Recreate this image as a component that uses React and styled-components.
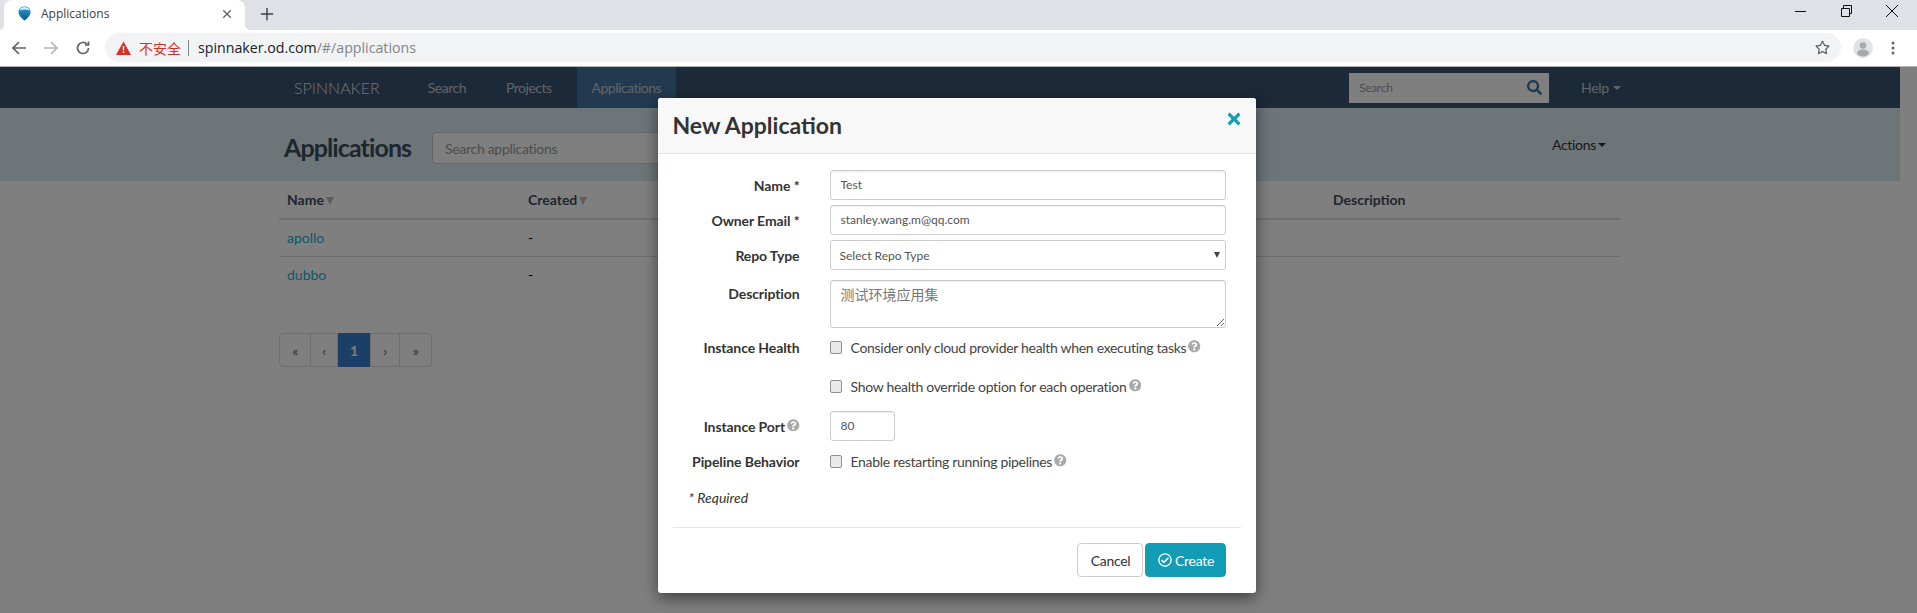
import React from 'react';
import styled, { createGlobalStyle } from 'styled-components';
import { FaQuestionCircle, FaSearch, FaTimes, FaRegCheckCircle, FaRegStar } from 'react-icons/fa';

const GlobalStyle = createGlobalStyle`
  html, body {
    margin: 0;
    height: 100%;
    overflow: hidden;
    background: #fff;
    font-family: "Lato", "Noto Sans CJK SC", sans-serif;
    letter-spacing: -0.3px;
  }
  * { box-sizing: border-box; }
`;

const Window = styled.div`
  display: flex;
  flex-direction: column;
  width: 1917px;
  height: 613px;
`;

// browser chrome
const TabStrip = styled.div`
  display: flex;
  align-items: flex-start;
  height: 30px;
  flex: none;
  background: #dee1e6;
  padding-left: 4px;
  letter-spacing: 0;
`;

const Tab = styled.div`
  position: relative;
  display: flex;
  align-items: center;
  width: 241px;
  height: 30px;
  padding: 0 12px 3px 14px;
  background: #fff;
  border-radius: 8px 8px 0 0;
  font-family: "Open Sans", sans-serif;
  font-size: 12px;
  color: #3c4043;

  &::before, &::after {
    content: '';
    position: absolute;
    bottom: 0;
    width: 6px;
    height: 6px;
  }
  &::before { left: -6px; background: radial-gradient(circle at 0 0, #dee1e6 6px, #fff 6.5px); }
  &::after { right: -6px; background: radial-gradient(circle at 100% 0, #dee1e6 6px, #fff 6.5px); }
`;

const TabTitle = styled.span`
  margin-left: 10px;
  flex: 1;
`;

const NewTab = styled.div`
  display: flex;
  align-items: center;
  height: 28px;
  margin-left: 15px;
`;

const WindowControls = styled.div`
  display: flex;
  align-items: center;
  gap: 30px;
  margin-left: auto;
  margin-right: 17px;
  height: 21px;
`;

const Toolbar = styled.div`
  display: flex;
  align-items: center;
  height: 37px;
  flex: none;
  padding: 0 0 1px 11px;
  background: #fff;
  border-bottom: 1px solid #b4b4b4;
  letter-spacing: 0;
`;

const NavIcons = styled.div`
  display: flex;
  align-items: center;
  gap: 16px;
  width: 94px;
`;

const Omnibox = styled.div`
  display: flex;
  align-items: center;
  width: 1736px;
  height: 29px;
  padding: 0 11px 0 11px;
  background: #f1f3f4;
  border-radius: 15px;
`;

const InsecureText = styled.span`
  margin-left: 8px;
  font-family: "Noto Sans CJK SC", sans-serif;
  font-size: 14px;
  color: #d93025;
`;

const OmniDivider = styled.span`
  width: 1px;
  height: 16px;
  margin: 0 9px 0 7px;
  background: #80868b;
`;

const Url = styled.span`
  flex: 1;
  font-family: "Open Sans", sans-serif;
  font-size: 14.2px;
  color: #80868b;
  b { font-weight: 400; color: #202124; }
`;

const ToolbarEnd = styled.div`
  display: flex;
  align-items: center;
  gap: 18px;
  margin-left: 12px;
`;

const StarIcon = styled(FaRegStar)`
  font-size: 15px;
  color: #5f6368;
`;

// spinnaker page
const Page = styled.div`
  position: relative;
  flex: 1;
  display: flex;
  overflow: hidden;
  background: #fff;
`;

const Main = styled.div`
  width: 1900px;
`;

const Nav = styled.div`
  height: 41px;
  background: #385270;
`;

const Container = styled.div`
  display: flex;
  align-items: center;
  width: 1341px;
  height: 100%;
  margin: 0 0 0 279px;
`;

const Brand = styled.div`
  margin: 0 33px 0 15px;
  font-size: 16px;
  font-weight: 300;
  letter-spacing: 0;
  color: #e4e7ea;
`;

const NavItems = styled.div`
  display: flex;
  gap: 10px;
  height: 100%;
`;

const NavItem = styled.div`
  display: flex;
  align-items: center;
  padding: 0 15px;
  font-size: 14px;
  letter-spacing: -0.5px;
  color: #c3c9d0;
  background: ${props => (props.$active ? '#45749f' : 'transparent')};
`;

const NavSearch = styled.div`
  display: flex;
  align-items: center;
  justify-content: space-between;
  width: 200px;
  height: 30px;
  margin-left: auto;
  padding: 0 7px 0 10px;
  background: #fff;
  font-size: 12px;
  color: #999;
`;

const NavSearchIcon = styled(FaSearch)`
  font-size: 15px;
  color: #45749f;
`;

const HelpMenu = styled.div`
  display: flex;
  align-items: center;
  gap: 4px;
  margin-left: 32px;
  width: 39px;
  font-size: 14px;
  color: #c3c9d0;
`;

const Caret = styled.span`
  width: 0;
  height: 0;
  border-left: 4px solid transparent;
  border-right: 4px solid transparent;
  border-top: 4px solid ${props => props.$color || 'currentColor'};
`;

const HeaderBand = styled.div`
  height: 73px;
  background: #dbebf0;
`;

const HeaderInner = styled(Container)`
  padding: 0 14px 0 5px;
  align-items: flex-start;
`;

const PageTitle = styled.h2`
  margin: 21px 0 0;
  width: 148px;
  font-size: 25px;
  font-weight: 700;
  line-height: 36px;
  letter-spacing: -0.9px;
  color: #3c4c5c;
`;

const FilterBox = styled.div`
  display: flex;
  align-items: center;
  width: 300px;
  height: 32px;
  margin-top: 24px;
  padding: 0 12px;
  background: #fff;
  border: 1px solid #ccc;
  border-radius: 4px;
  font-size: 14px;
  color: #999;
`;

const ActionsMenu = styled.div`
  display: flex;
  align-items: center;
  gap: 2px;
  margin: 28px 0 0 auto;
  font-size: 14px;
  color: #333;
`;

const TableWrap = styled.div`
  width: 1341px;
  margin-left: 279px;
`;

const TableRow = styled.div`
  display: grid;
  grid-template-columns: 241px 805px 1fr;
  align-items: center;
  padding: ${props => (props.$head ? '0' : '0 0 2px')} 8px;
  height: ${props => (props.$head ? '39px' : '37px')};
  border-bottom: ${props => (props.$head ? '2px solid #ddd' : props.$last ? 'none' : '1px solid #ddd')};
  font-size: 14px;
  font-weight: ${props => (props.$head ? 700 : 400)};
  letter-spacing: 0;
  color: #3c4c5c;
`;

const AppLink = styled.span`
  color: #22aed8;
`;

const Dash = styled.span`
  color: #000;
`;

const SortCaret = styled.span`
  display: inline-block;
  width: 0;
  height: 0;
  margin-left: 2px;
  border-left: 4px solid transparent;
  border-right: 4px solid transparent;
  border-top: 8px solid #bbb;
`;

const Pagination = styled.div`
  display: flex;
  width: fit-content;
  height: 34px;
  margin-top: 39px;
  border: 1px solid #ddd;
  border-radius: 4px;
`;

const PageCell = styled.div`
  display: flex;
  align-items: center;
  justify-content: center;
  width: ${props => props.$w}px;
  border-right: ${props => (props.$end ? 'none' : '1px solid #ddd')};
  font-size: 14px;
  font-weight: ${props => (props.$active ? 700 : 400)};
  color: ${props => (props.$active ? '#fff' : '#666')};
  background: ${props => (props.$active ? '#397fcf' : 'transparent')};
  margin: ${props => (props.$active ? '-1px 0' : '0')};
`;

const ScrollGutter = styled.div`
  flex: 1;
  background: #fff;
`;

// modal
const Backdrop = styled.div`
  position: absolute;
  inset: 0;
  display: flex;
  justify-content: center;
  padding-top: 31px;
  background: rgba(0, 0, 0, 0.5);
`;

const Modal = styled.div`
  align-self: flex-start;
  width: 598px;
  height: 495px;
  background: #fff;
  border-radius: 3px;
  box-shadow: 0 5px 15px rgba(0, 0, 0, 0.5);
  transform: translateX(-2px);
`;

const ModalHeader = styled.div`
  position: relative;
  height: 56px;
  padding: 10px 15px;
  background: #f8f8f8;
  border-bottom: 1px solid #e5e5e5;
  border-radius: 3px 3px 0 0;
`;

const ModalTitle = styled.h3`
  margin: 0;
  font-size: 23px;
  font-weight: 700;
  line-height: 34px;
  letter-spacing: 0;
  color: #333;
`;

const CloseIcon = styled(FaTimes)`
  position: absolute;
  top: 12px;
  right: 13px;
  font-size: 18px;
  color: #139cb5;
`;

const ModalBody = styled.div`
  display: flex;
  flex-direction: column;
  padding: 16px 30px 0 15px;
`;

const FormRow = styled.div`
  display: grid;
  grid-template-columns: 127px 1fr;
  column-gap: 30px;
  align-items: ${props => props.$align || 'center'};
  margin-bottom: ${props => props.$gap ?? 5}px;
`;

const FieldLabel = styled.label`
  justify-self: end;
  display: flex;
  align-items: center;
  gap: 2px;
  padding-top: ${props => props.$top || 0}px;
  font-size: 14px;
  font-weight: 700;
  letter-spacing: -0.1px;
  color: #333;
`;

const TextInput = styled.input`
  width: ${props => props.$w || '396px'};
  height: 30px;
  padding: 0 10px 2px;
  border: 1px solid #ccc;
  border-radius: 3px;
  box-shadow: inset 0 1px 1px rgba(0, 0, 0, 0.075);
  font-family: inherit;
  font-size: 12px;
  color: #555;
`;

const SelectWrap = styled.div`
  position: relative;
  width: 396px;

  &::after {
    content: '';
    position: absolute;
    top: 12px;
    right: 6px;
    border-left: 3px solid transparent;
    border-right: 3px solid transparent;
    border-top: 6px solid #444;
  }
`;

const Select = styled.select`
  appearance: none;
  width: 100%;
  height: 30px;
  padding: 0 9px;
  background: #fff;
  border: 1px solid #ccc;
  border-radius: 3px;
  font-family: inherit;
  font-size: 12px;
  color: #555;
`;

const TextArea = styled.textarea`
  display: block;
  width: 396px;
  height: 48px;
  padding: 3px 10px;
  border: 1px solid #ccc;
  border-radius: 3px;
  box-shadow: inset 0 1px 1px rgba(0, 0, 0, 0.075);
  font-family: "Noto Sans CJK SC", sans-serif;
  font-size: 14px;
  color: #777;
`;

const CheckLine = styled.label`
  display: flex;
  align-items: center;
  gap: 9px;
  font-size: 14px;
  color: #444;
`;

const CheckBox = styled.input`
  appearance: none;
  width: 12px;
  height: 13px;
  margin: 0;
  background: #e9e9e9;
  border: 1px solid #8f8f8f;
  border-radius: 2px;
`;

const HelpIcon = styled(FaQuestionCircle)`
  font-size: 12.5px;
  color: #a9a9a9;
  margin-left: -7px;
  transform: translateY(-1px);
`;

const PortHelpIcon = styled(HelpIcon)`
  margin-left: 0;
`;

const RequiredNote = styled.div`
  margin: 19px 0 0 16px;
  font-size: 14px;
  font-style: italic;
  letter-spacing: 0;
  color: #333;
`;

const ModalDivider = styled.div`
  height: 1px;
  margin: 21px 15px 0;
  background: #e5e5e5;
`;

const ModalFooter = styled.div`
  display: flex;
  justify-content: flex-end;
  gap: 2px;
  padding: 15px 30px 0 0;
`;

const FooterButton = styled.button`
  display: flex;
  align-items: center;
  justify-content: center;
  gap: 3px;
  width: ${props => (props.$primary ? '81px' : '66px')};
  height: 34px;
  padding: 0 0 0 2px;
  border: 1px solid ${props => (props.$primary ? '#139cb5' : '#ccc')};
  border-radius: 4px;
  background: ${props => (props.$primary ? '#139cb5' : '#fff')};
  color: ${props => (props.$primary ? '#fff' : '#333')};
  font-family: inherit;
  font-size: 14px;
  letter-spacing: -0.3px;
`;

const Favicon = () => (
  <svg width="13" height="15" viewBox="0 0 13 15">
    <defs>
      <linearGradient id="faviconFill" x1="0" y1="0" x2="0" y2="1">
        <stop offset="0" stopColor="#2a9ad6" />
        <stop offset="1" stopColor="#0b5d8c" />
      </linearGradient>
    </defs>
    <path d="M6.5 0.5C3 0.5 0.5 2.5 0.5 6c0 3.5 3 6.500 6 8.500 3-2 6-5 6-8.500C12.500 2.500 10 0.500 6.500 0.500z" fill="url(#faviconFill)" />
    <path d="M1.500 4.500c3-1.500 7-1.500 10 0C11 2.300 9 1 6.500 1S2 2.300 1.500 4.500z" fill="#d8eef7" />
  </svg>
);

const Glyph = ({ d, color = '#5f6368', size = 16, sw = 1.7 }) => (
  <svg width={size} height={size} viewBox="0 0 16 16" fill="none" stroke={color} strokeWidth={sw}>
    <path d={d} />
  </svg>
);

const WarningIcon = () => (
  <svg width="15" height="14" viewBox="0 0 15 14">
    <path d="M7.500 0.500L15 14H0z" fill="#d93025" />
    <path d="M6.800 5h1.400v4.500H6.800zM6.800 10.500h1.400V12H6.800z" fill="#fff" />
  </svg>
);

const Avatar = () => (
  <svg width="20" height="20" viewBox="0 0 20 20">
    <circle cx="10" cy="10" r="10" fill="#e2e3e5" />
    <circle cx="10" cy="7.500" r="3.300" fill="#a8aaad" />
    <ellipse cx="10" cy="15" rx="6" ry="3.500" fill="#a8aaad" />
  </svg>
);

const MenuDots = () => (
  <svg width="4" height="14" viewBox="0 0 4 14" fill="#5f6368">
    <circle cx="2" cy="2" r="1.500" />
    <circle cx="2" cy="7" r="1.500" />
    <circle cx="2" cy="12" r="1.500" />
  </svg>
);

const BrowserChrome = () => (
  <>
    <TabStrip>
      <Tab>
        <Favicon />
        <TabTitle>Applications</TabTitle>
        <Glyph size={12} sw={1.8} d="M3 3l10 10M13 3L3 13" />
      </Tab>
      <NewTab>
        <Glyph size={14} color="#3c4043" sw={1.6} d="M8 1v14M1 8h14" />
      </NewTab>
      <WindowControls>
        <Glyph size={16} color="#111" sw={1} d="M3 8.500h11" />
        <Glyph size={16} color="#111" sw={1} d="M3.500 5.500h8v8h-8zM5.500 5.500v-3h8v8h-2" />
        <Glyph size={16} color="#111" sw={1} d="M2 2l12 12M14 2L2 14" />
      </WindowControls>
    </TabStrip>
    <Toolbar>
      <NavIcons>
        <Glyph d="M15 8H2M8 2L2 8l6 6" />
        <Glyph color="#b4b7bb" d="M1 8h13M8 2l6 6-6 6" />
        <Glyph d="M13.500 8a5.500 5.500 0 1 1-1.600-3.900M13.500 1.500v3.500H10" />
      </NavIcons>
      <Omnibox>
        <WarningIcon />
        <InsecureText>不安全</InsecureText>
        <OmniDivider />
        <Url><b>spinnaker.od.com</b>/#/applications</Url>
        <StarIcon />
      </Omnibox>
      <ToolbarEnd>
        <Avatar />
        <MenuDots />
      </ToolbarEnd>
    </Toolbar>
  </>
);

const BackgroundPage = () => (
  <Main>
    <Nav>
      <Container>
        <Brand>SPINNAKER</Brand>
        <NavItems>
          <NavItem>Search</NavItem>
          <NavItem>Projects</NavItem>
          <NavItem $active>Applications</NavItem>
        </NavItems>
        <NavSearch>
          Search
          <NavSearchIcon />
        </NavSearch>
        <HelpMenu>Help <Caret /></HelpMenu>
      </Container>
    </Nav>
    <HeaderBand>
      <HeaderInner>
        <PageTitle>Applications</PageTitle>
        <FilterBox>Search applications</FilterBox>
        <ActionsMenu>Actions <Caret $color="#333" /></ActionsMenu>
      </HeaderInner>
    </HeaderBand>
    <TableWrap>
      <TableRow $head>
        <span>Name<SortCaret /></span>
        <span>Created<SortCaret /></span>
        <span>Description</span>
      </TableRow>
      <TableRow>
        <AppLink>apollo</AppLink>
        <Dash>-</Dash>
      </TableRow>
      <TableRow $last>
        <AppLink>dubbo</AppLink>
        <Dash>-</Dash>
      </TableRow>
      <Pagination>
        <PageCell $w={31}>«</PageCell>
        <PageCell $w={27}>‹</PageCell>
        <PageCell $w={33} $active>1</PageCell>
        <PageCell $w={29}>›</PageCell>
        <PageCell $w={31} $end>»</PageCell>
      </Pagination>
    </TableWrap>
  </Main>
);

const NewApplicationModal = () => (
  <Backdrop>
    <Modal>
      <ModalHeader>
        <ModalTitle>New Application</ModalTitle>
        <CloseIcon />
      </ModalHeader>
      <ModalBody>
        <FormRow>
          <FieldLabel>Name *</FieldLabel>
          <TextInput defaultValue="Test" />
        </FormRow>
        <FormRow>
          <FieldLabel>Owner Email *</FieldLabel>
          <TextInput defaultValue="stanley.wang.m@qq.com" />
        </FormRow>
        <FormRow $gap={10}>
          <FieldLabel>Repo Type</FieldLabel>
          <SelectWrap>
            <Select defaultValue="">
              <option value="">Select Repo Type</option>
            </Select>
          </SelectWrap>
        </FormRow>
        <FormRow $align="start" $gap={11}>
          <FieldLabel $top={5}>Description</FieldLabel>
          <TextArea defaultValue="测试环境应用集" />
        </FormRow>
        <FormRow $gap={22}>
          <FieldLabel>Instance Health</FieldLabel>
          <CheckLine>
            <CheckBox type="checkbox" />
            Consider only cloud provider health when executing tasks
            <HelpIcon />
          </CheckLine>
        </FormRow>
        <FormRow $gap={16}>
          <span />
          <CheckLine>
            <CheckBox type="checkbox" />
            Show health override option for each operation
            <HelpIcon />
          </CheckLine>
        </FormRow>
        <FormRow $gap={12}>
          <FieldLabel>Instance Port <PortHelpIcon /></FieldLabel>
          <TextInput $w="65px" defaultValue="80" />
        </FormRow>
        <FormRow $gap={0}>
          <FieldLabel>Pipeline Behavior</FieldLabel>
          <CheckLine>
            <CheckBox type="checkbox" />
            Enable restarting running pipelines
            <HelpIcon />
          </CheckLine>
        </FormRow>
        <RequiredNote>* Required</RequiredNote>
      </ModalBody>
      <ModalDivider />
      <ModalFooter>
        <FooterButton>Cancel</FooterButton>
        <FooterButton $primary><FaRegCheckCircle /> Create</FooterButton>
      </ModalFooter>
    </Modal>
  </Backdrop>
);

export default function App() {
  return (
    <Window>
      <GlobalStyle />
      <BrowserChrome />
      <Page>
        <BackgroundPage />
        <ScrollGutter />
        <NewApplicationModal />
      </Page>
    </Window>
  );
}
